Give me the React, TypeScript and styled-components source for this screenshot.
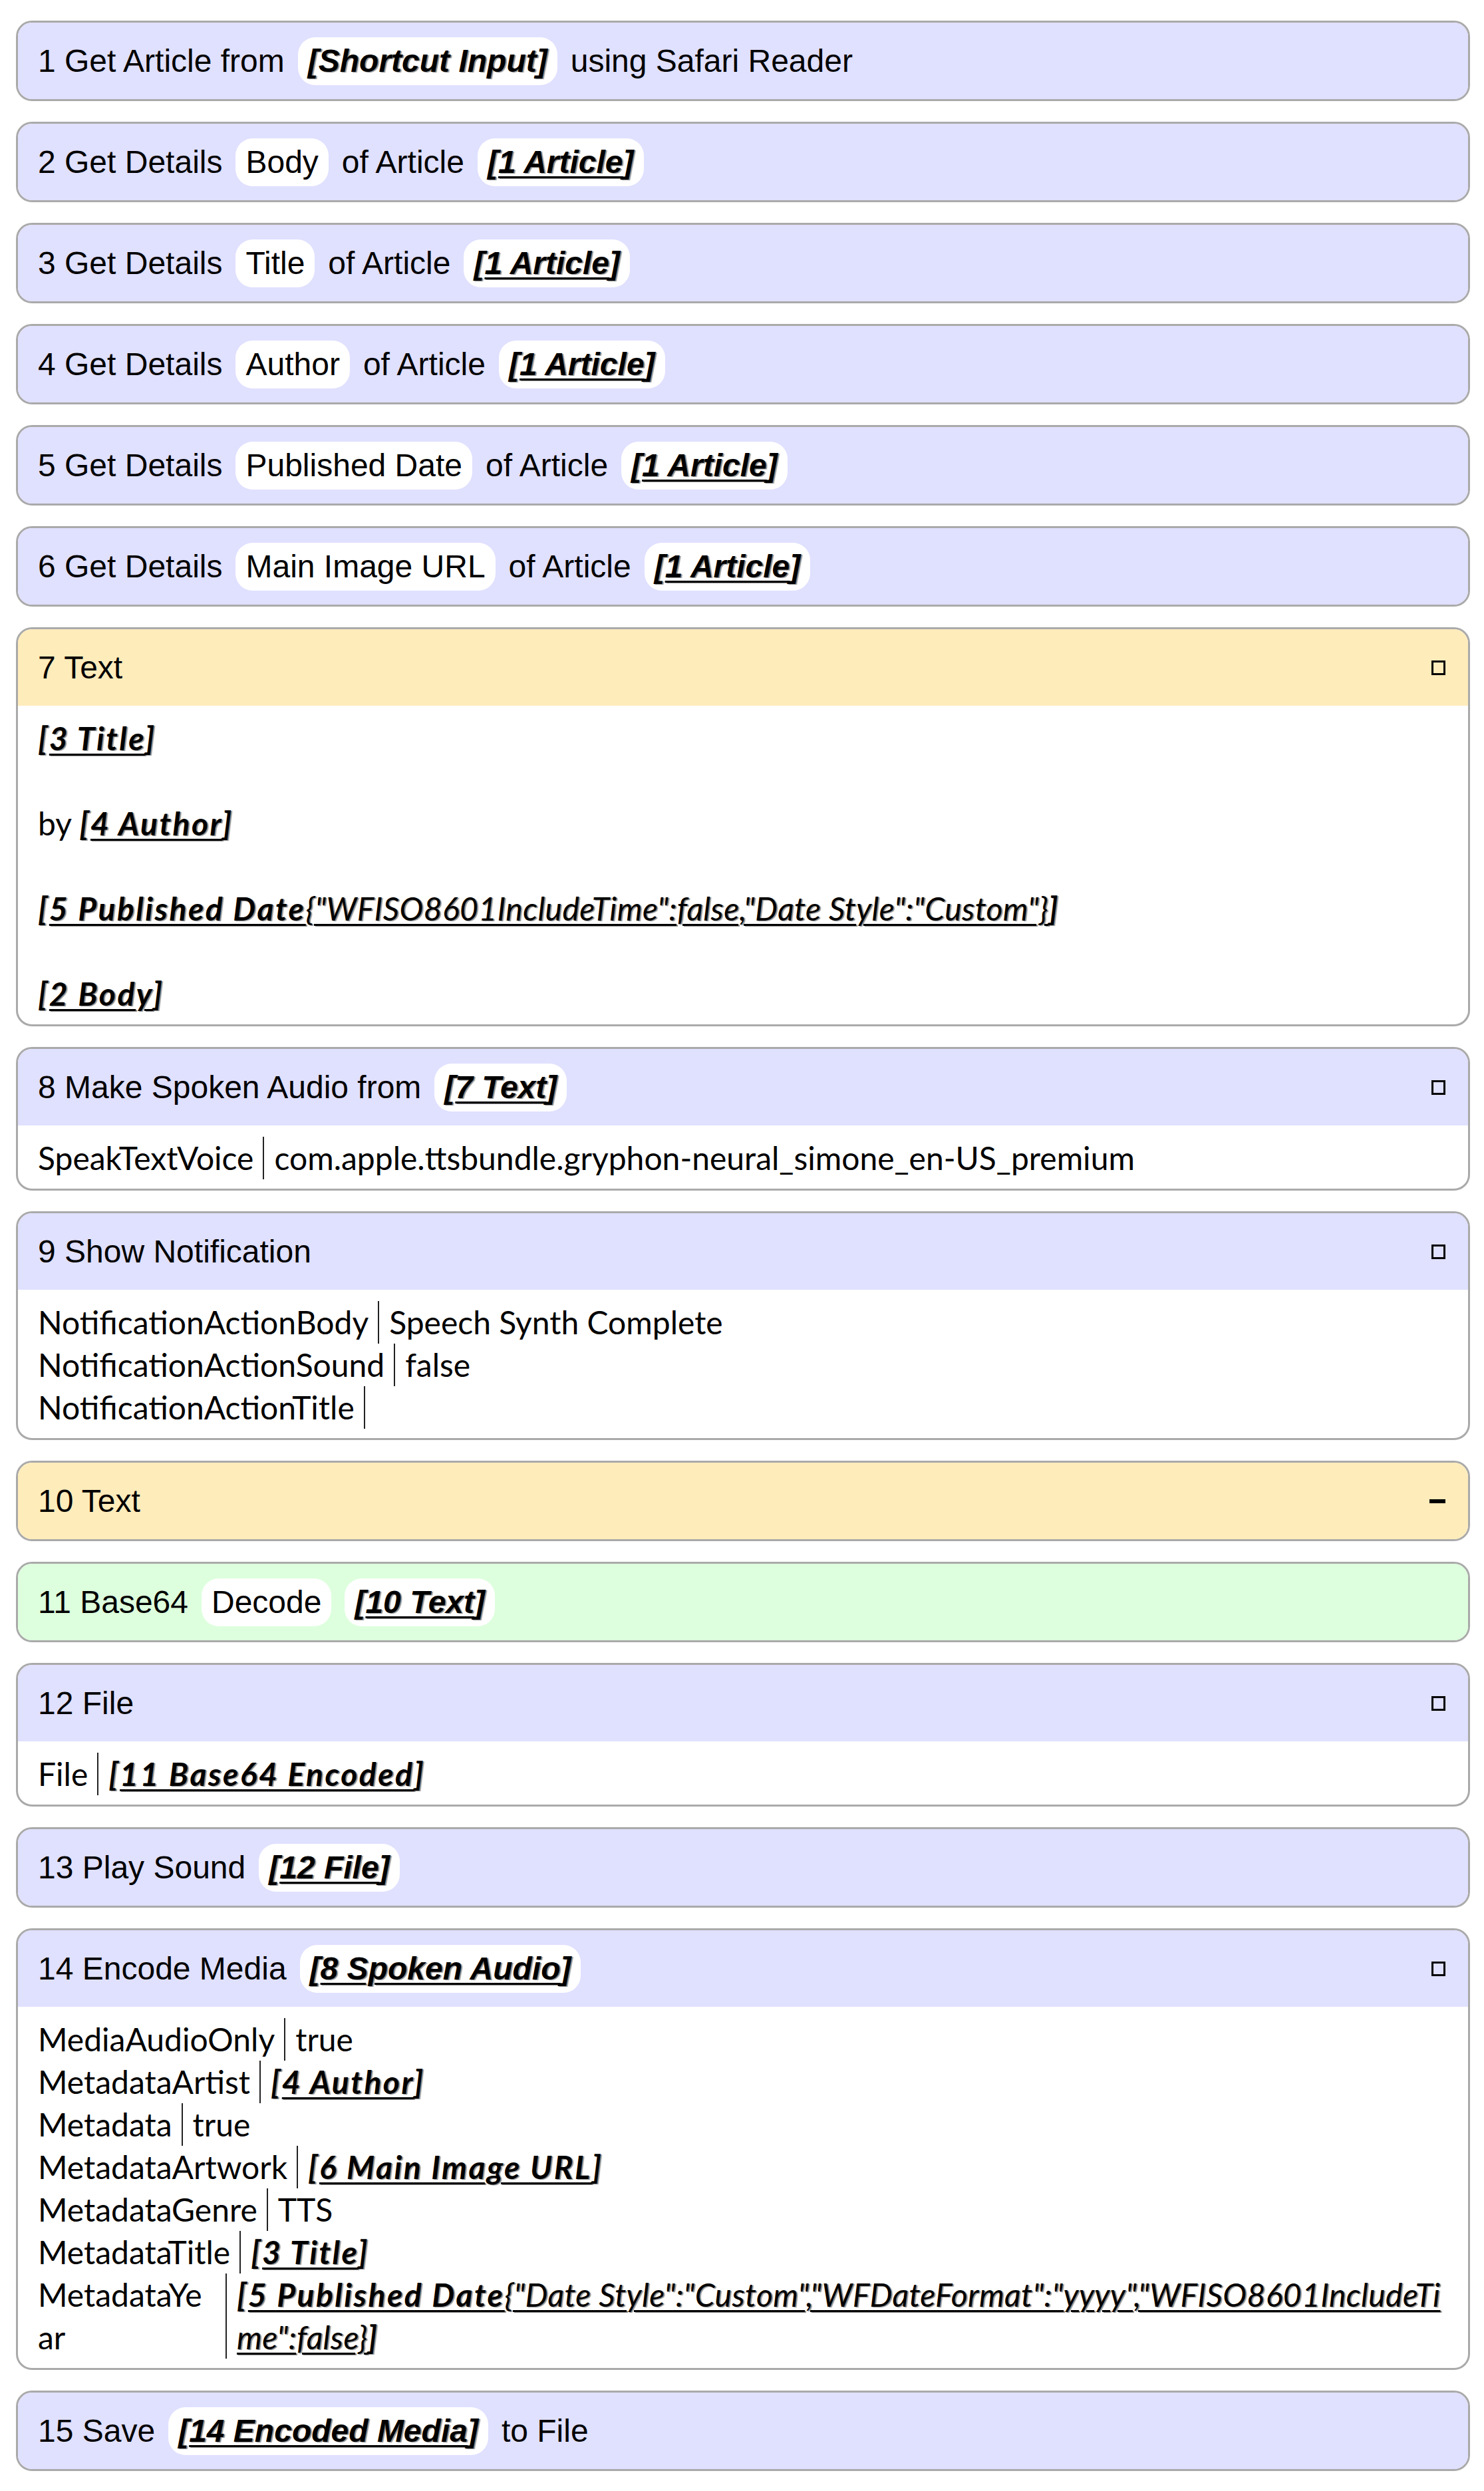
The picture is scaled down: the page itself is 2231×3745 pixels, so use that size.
import React from 'react';
import styled, { createGlobalStyle } from 'styled-components';

type Tone = 'action' | 'text' | 'script';
type Seg = string | { pill: string } | { v: string; agg?: string; plain?: boolean };
type KV = { k: string; val: Seg[]; width?: number };

type Step = {
  title: Seg[];
  tone?: Tone;
  toggle?: 'square' | 'minus';
  text?: Seg[];
  rows?: KV[];
};

const toneColor: Record<Tone, string> = {
  action: '#e0e0ff',
  text: '#ffecbb',
  script: '#ddffdd',
};

const GlobalStyle = createGlobalStyle`
  html, body {
    margin: 0;
    padding: 0;
    background: #ffffff;
  }
  body {
    font-family: 'Liberation Sans', Arial, sans-serif;
    color: #000;
  }
`;

const Page = styled.div`
  padding: 31px 21px 30px 24px;
`;

const Card = styled.section`
  border: 3px solid #aaaaaa;
  border-radius: 24px;
  overflow: hidden;
  background: #ffffff;
  margin-bottom: 31px;
`;

const Header = styled.div<{ $tone: Tone }>`
  display: flex;
  align-items: center;
  min-height: 115px;
  padding: 0 34px 0 30px;
  background: ${p => toneColor[p.$tone]};
  font-family: 'Liberation Sans', Arial, sans-serif;
  font-size: 48px;
`;

const Title = styled.div`
  flex: 1;
  display: flex;
  align-items: center;
  gap: 20px;
  white-space: nowrap;
`;

const Pill = styled.span`
  display: inline-block;
  background: #ffffff;
  border-radius: 26px;
  padding: 0 15px;
  line-height: 72px;
`;

// variables: bold italic, wider tracking when set in the body face
const VarText = styled.span<{ $body?: boolean }>`
  font-weight: 700;
  font-style: italic;
  letter-spacing: ${p => (p.$body ? '2.5px' : 'normal')};
  text-shadow: 2px 1px 1px rgba(0, 0, 0, 0.45);
`;

const VarName = styled.span<{ $plain?: boolean }>`
  text-decoration: ${p => (p.$plain ? 'none' : 'underline')};
  text-decoration-thickness: 3px;
  text-underline-offset: 5px;
`;

const Agg = styled.span`
  font-weight: 400;
  letter-spacing: 0.4px;
`;

const Square = styled.span`
  flex: none;
  box-sizing: border-box;
  width: 21px;
  height: 22px;
  border: 3px solid #000;
`;

const Minus = styled.span`
  flex: none;
  width: 24px;
  height: 6px;
  background: #000;
`;

const Body = styled.div`
  padding: 17px 30px 14px;
  font-family: Lato, 'Open Sans', sans-serif;
  font-size: 48px;
  line-height: 64px;
`;

const FreeText = styled.div`
  white-space: pre-wrap;
  overflow-wrap: anywhere;
`;

const Row = styled.div`
  display: flex;
  align-items: stretch;
`;

const Key = styled.span<{ $width?: number }>`
  flex: none;
  padding-right: 14px;
  border-right: 2px solid #222;
  ${p => (p.$width ? `width: ${p.$width}px; word-break: break-all;` : '')}
`;

const Value = styled.span`
  flex: 1;
  min-width: 0;
  padding-left: 15px;
  word-break: break-all;
`;

const steps: Step[] = [
  { title: ['1 Get Article from', { v: 'Shortcut Input', plain: true }, 'using Safari Reader'] },
  { title: ['2 Get Details', { pill: 'Body' }, 'of Article', { v: '1 Article' }] },
  { title: ['3 Get Details', { pill: 'Title' }, 'of Article', { v: '1 Article' }] },
  { title: ['4 Get Details', { pill: 'Author' }, 'of Article', { v: '1 Article' }] },
  { title: ['5 Get Details', { pill: 'Published Date' }, 'of Article', { v: '1 Article' }] },
  { title: ['6 Get Details', { pill: 'Main Image URL' }, 'of Article', { v: '1 Article' }] },
  {
    title: ['7 Text'],
    tone: 'text',
    toggle: 'square',
    text: [
      { v: '3 Title' },
      '\n\nby ',
      { v: '4 Author' },
      '\n\n',
      { v: '5 Published Date', agg: '{"WFISO8601IncludeTime":false,"Date Style":"Custom"}' },
      '\n\n',
      { v: '2 Body' },
    ],
  },
  {
    title: ['8 Make Spoken Audio from', { v: '7 Text' }],
    toggle: 'square',
    rows: [{ k: 'SpeakTextVoice', val: ['com.apple.ttsbundle.gryphon-neural_simone_en-US_premium'] }],
  },
  {
    title: ['9 Show Notification'],
    toggle: 'square',
    rows: [
      { k: 'NotificationActionBody', val: ['Speech Synth Complete'] },
      { k: 'NotificationActionSound', val: ['false'] },
      { k: 'NotificationActionTitle', val: [] },
    ],
  },
  { title: ['10 Text'], tone: 'text', toggle: 'minus' },
  { title: ['11 Base64', { pill: 'Decode' }, { v: '10 Text' }], tone: 'script' },
  {
    title: ['12 File'],
    toggle: 'square',
    rows: [{ k: 'File', val: [{ v: '11 Base64 Encoded' }] }],
  },
  { title: ['13 Play Sound', { v: '12 File' }] },
  {
    title: ['14 Encode Media', { v: '8 Spoken Audio' }],
    toggle: 'square',
    rows: [
      { k: 'MediaAudioOnly', val: ['true'] },
      { k: 'MetadataArtist', val: [{ v: '4 Author' }] },
      { k: 'Metadata', val: ['true'] },
      { k: 'MetadataArtwork', val: [{ v: '6 Main Image URL' }] },
      { k: 'MetadataGenre', val: ['TTS'] },
      { k: 'MetadataTitle', val: [{ v: '3 Title' }] },
      {
        k: 'MetadataYear',
        width: 268,
        val: [
          {
            v: '5 Published Date',
            agg: '{"Date Style":"Custom","WFDateFormat":"yyyy","WFISO8601IncludeTime":false}',
          },
        ],
      },
    ],
  },
  { title: ['15 Save', { v: '14 Encoded Media' }, 'to File'] },
];

function Variable({ v, agg, plain, body }: { v: string; agg?: string; plain?: boolean; body?: boolean }) {
  return (
    <VarText $body={body}>
      [
      <VarName $plain={plain}>
        {v}
        {agg && <Agg>{agg}</Agg>}
      </VarName>
      ]
    </VarText>
  );
}

function renderSegs(segs: Seg[], inHeader: boolean) {
  return segs.map((s, i) => {
    if (typeof s === 'string') return <React.Fragment key={i}>{s}</React.Fragment>;
    if ('v' in s) {
      const node = <Variable v={s.v} agg={s.agg} plain={s.plain} body={!inHeader} />;
      return inHeader ? <Pill key={i}>{node}</Pill> : <React.Fragment key={i}>{node}</React.Fragment>;
    }
    return <Pill key={i}>{s.pill}</Pill>;
  });
}

export default function App() {
  return (
    <>
      <GlobalStyle />
      <Page>
        {steps.map((step, idx) => (
          <Card key={idx}>
            <Header $tone={step.tone ?? 'action'}>
              <Title>{renderSegs(step.title, true)}</Title>
              {step.toggle === 'square' && <Square />}
              {step.toggle === 'minus' && <Minus />}
            </Header>
            {step.text && (
              <Body>
                <FreeText>{renderSegs(step.text, false)}</FreeText>
              </Body>
            )}
            {step.rows && (
              <Body>
                {step.rows.map(r => (
                  <Row key={r.k}>
                    <Key $width={r.width}>{r.k}</Key>
                    <Value>{renderSegs(r.val, false)}</Value>
                  </Row>
                ))}
              </Body>
            )}
          </Card>
        ))}
      </Page>
    </>
  );
}
